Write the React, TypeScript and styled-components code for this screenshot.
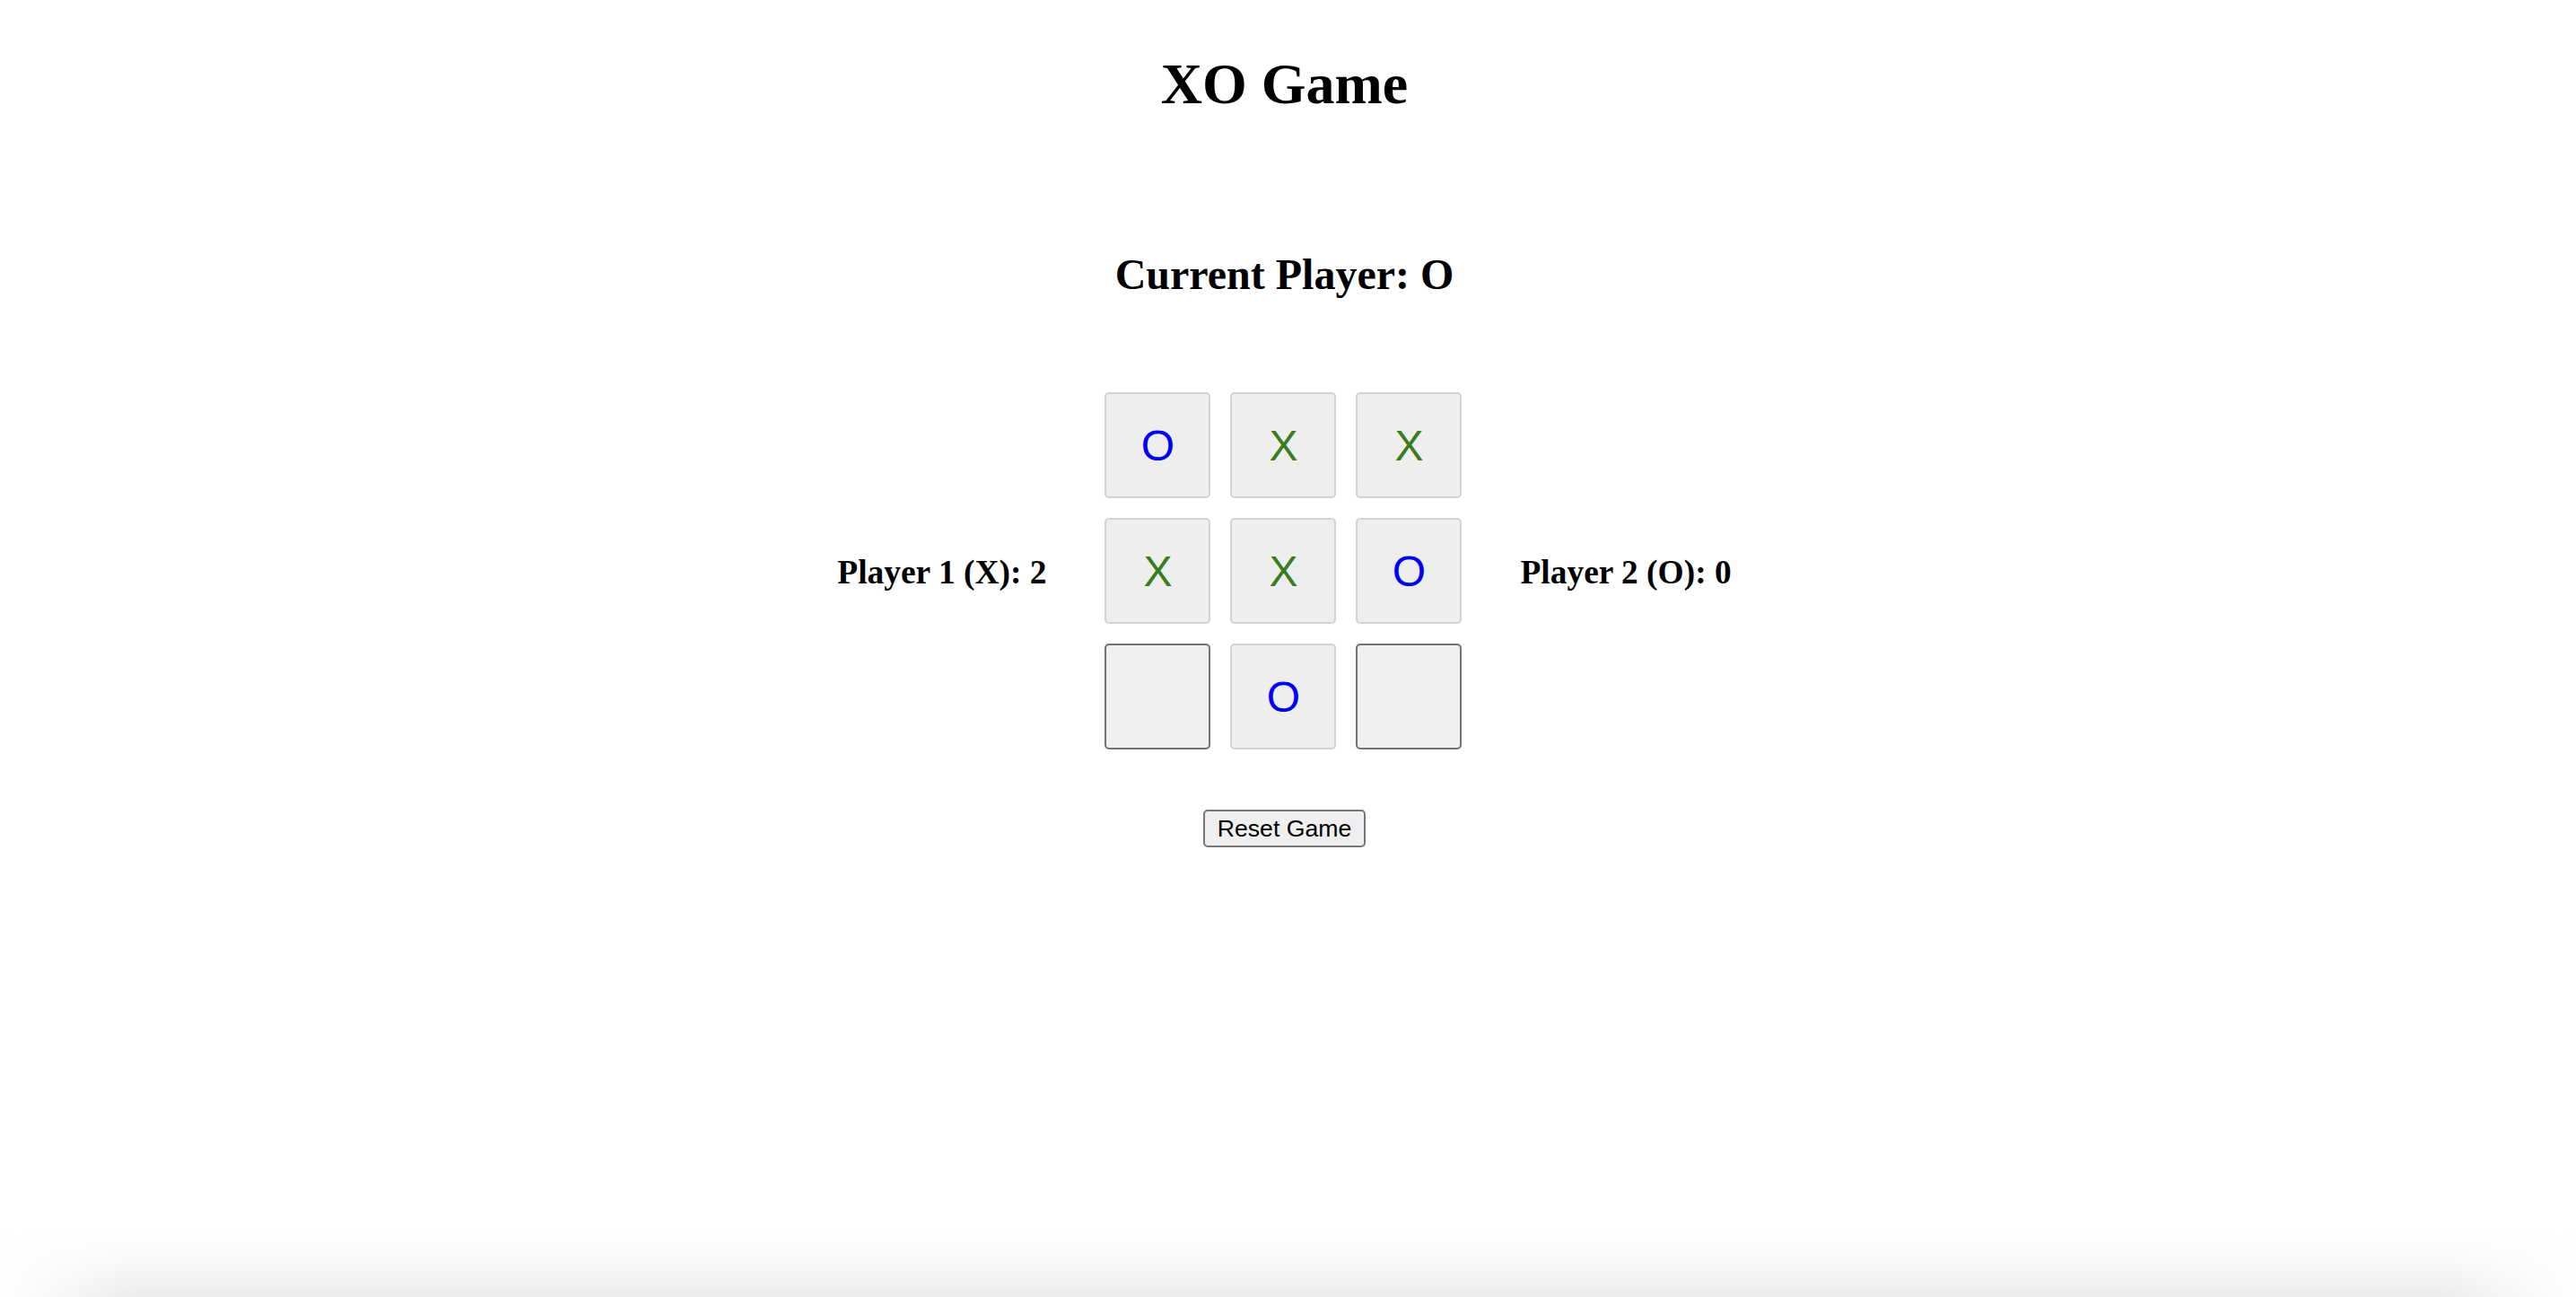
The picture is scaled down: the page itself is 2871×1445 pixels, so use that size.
import React, { useState } from "react";
import styled, { createGlobalStyle } from "styled-components";

const GlobalStyle = createGlobalStyle`
  html, body {
    margin: 0;
    padding: 0;
    background: #ffffff;
    font-family: "Liberation Serif", "Times New Roman", serif;
    color: #000000;
  }
`;

const Page = styled.main`
  display: flex;
  flex-direction: column;
  align-items: center;
  padding-right: 8px;
  min-height: 100vh;
  box-sizing: border-box;
`;

const Title = styled.h1`
  margin: 62px 0 0;
  font-size: 64px;
  line-height: 64px;
  font-weight: 700;
`;

const Status = styled.h2`
  margin: 156px 0 0;
  font-size: 48px;
  line-height: 48px;
  font-weight: 700;
`;

const BoardRow = styled.section`
  margin-top: 107px;
  display: flex;
  align-items: center;
  gap: 65px;
`;

const ScoreLabel = styled.h3`
  margin: 0;
  padding-top: 4px;
  font-size: 37.44px;
  line-height: 37.44px;
  font-weight: 700;
  white-space: nowrap;
`;

const Grid = styled.div`
  display: grid;
  grid-template-columns: repeat(3, 118px);
  grid-auto-rows: 118px;
  gap: 22px;
`;

type Mark = "X" | "O" | "";

const Cell = styled.button<{ $mark: Mark }>`
  width: 118px;
  height: 118px;
  box-sizing: border-box;
  margin: 0;
  padding: 2px 0 0;
  border-radius: 5px;
  border: 2px solid ${(p) => (p.$mark ? "#d2d2d2" : "#737373")};
  background: ${(p) => (p.$mark ? "#eeeeee" : "#efefef")};
  font-family: "Liberation Sans", Arial, sans-serif;
  font-size: 48px;
  line-height: 1;
  color: ${(p) => (p.$mark === "X" ? "#3a7d1e" : "#0000f5")};
  display: flex;
  align-items: center;
  justify-content: center;
  cursor: ${(p) => (p.$mark ? "default" : "pointer")};
`;

const ResetButton = styled.button`
  margin-top: 67px;
  width: 181px;
  height: 42px;
  box-sizing: border-box;
  padding: 0;
  border: 2px solid #767676;
  border-radius: 5px;
  background: #efefef;
  font-family: "Liberation Sans", Arial, sans-serif;
  font-size: 26.67px;
  color: #000000;
  cursor: pointer;
`;

const BottomShade = styled.div`
  position: fixed;
  left: 0;
  right: 0;
  bottom: 0;
  height: 72px;
  pointer-events: none;
  background: linear-gradient(
    to bottom,
    rgba(238, 238, 238, 0) 0%,
    rgba(246, 246, 246, 0.8) 45%,
    rgba(236, 236, 236, 1) 100%
  );
  -webkit-mask-image: linear-gradient(
    to right,
    transparent 0,
    #000 150px,
    #000 calc(100% - 150px),
    transparent 100%
  );
  mask-image: linear-gradient(
    to right,
    transparent 0,
    #000 150px,
    #000 calc(100% - 150px),
    transparent 100%
  );
`;

const initialBoard: Mark[] = ["O", "X", "X", "X", "X", "O", "", "O", ""];

const lines = [
  [0, 1, 2],
  [3, 4, 5],
  [6, 7, 8],
  [0, 3, 6],
  [1, 4, 7],
  [2, 5, 8],
  [0, 4, 8],
  [2, 4, 6],
];

function winnerOf(b: Mark[]): Mark {
  for (const [a, c, d] of lines) {
    if (b[a] && b[a] === b[c] && b[a] === b[d]) return b[a];
  }
  return "";
}

export default function App() {
  const [board, setBoard] = useState<Mark[]>(initialBoard);
  const [player, setPlayer] = useState<"X" | "O">("O");
  const [scores, setScores] = useState({ X: 2, O: 0 });

  const play = (i: number) => {
    if (board[i] || winnerOf(board)) return;
    const next = board.slice();
    next[i] = player;
    setBoard(next);
    const w = winnerOf(next);
    if (w) {
      setScores((s) => ({ ...s, [w]: s[w as "X" | "O"] + 1 }));
    } else {
      setPlayer(player === "X" ? "O" : "X");
    }
  };

  const reset = () => {
    setBoard(["", "", "", "", "", "", "", "", ""]);
    setPlayer("X");
  };

  return (
    <>
      <GlobalStyle />
      <Page>
        <Title>XO Game</Title>
        <Status>Current Player: {player}</Status>
        <BoardRow>
          <ScoreLabel>Player 1 (X): {scores.X}</ScoreLabel>
          <Grid>
            {board.map((m, i) => (
              <Cell key={i} $mark={m} onClick={() => play(i)}>
                {m}
              </Cell>
            ))}
          </Grid>
          <ScoreLabel>Player 2 (O): {scores.O}</ScoreLabel>
        </BoardRow>
        <ResetButton onClick={reset}>Reset Game</ResetButton>
      </Page>
      <BottomShade />
    </>
  );
}
